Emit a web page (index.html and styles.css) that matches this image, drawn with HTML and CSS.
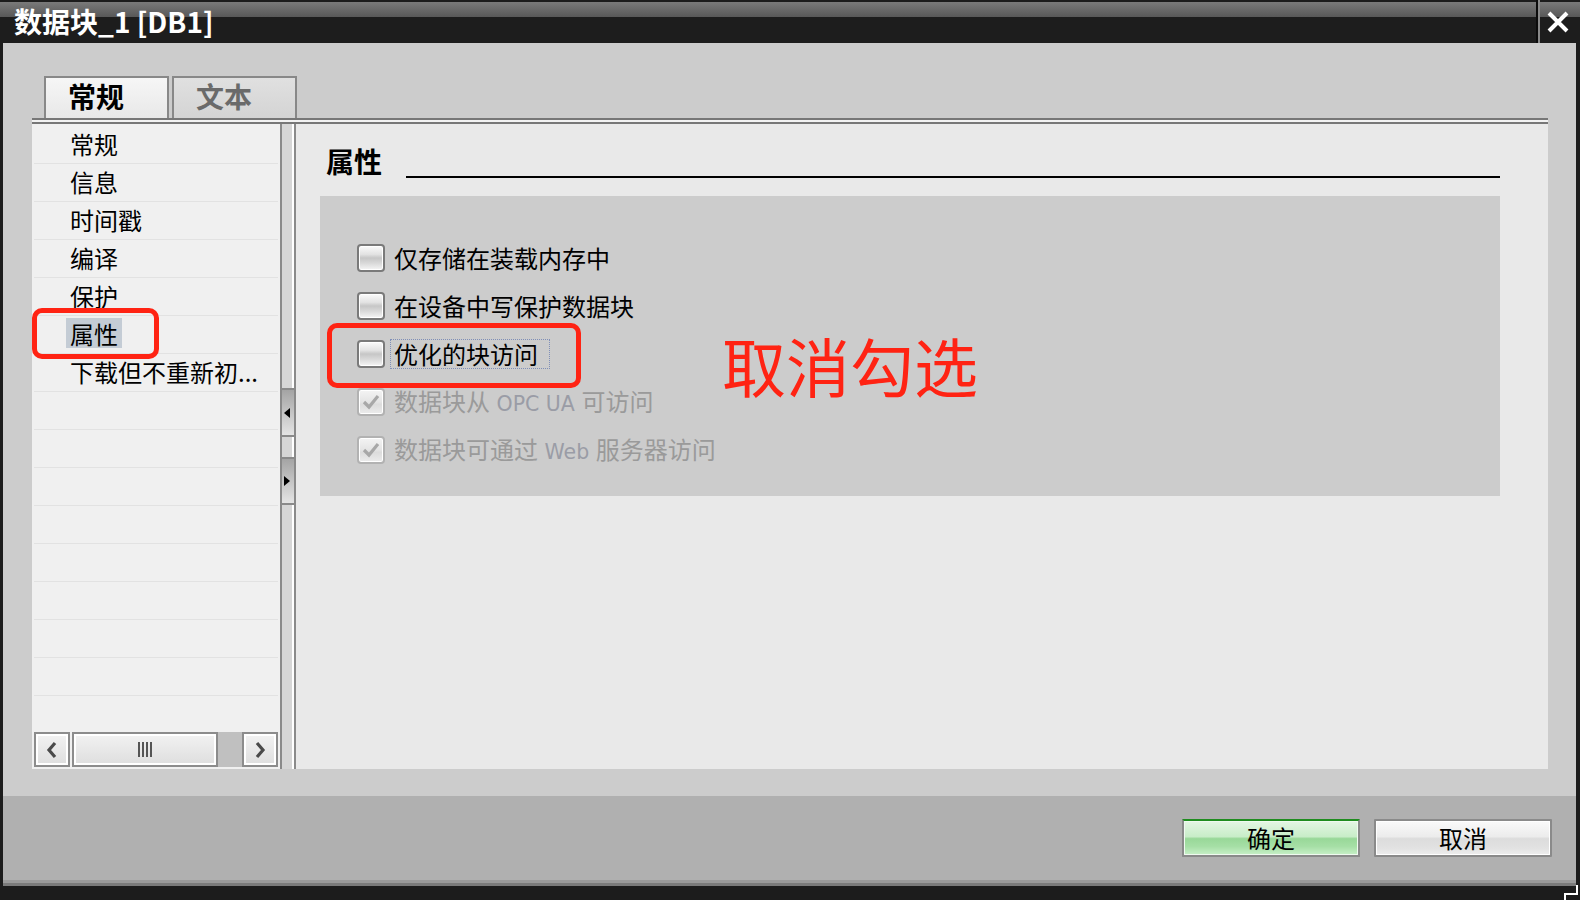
FILE: index.html
```html
<!DOCTYPE html>
<html lang="zh-CN">
<head>
<meta charset="utf-8">
<title>数据块_1 [DB1]</title>
<link rel="stylesheet" href="styles.css">
</head>
<body>
<div class="window">
  <div class="titlebar">
    <div class="title">数据块_1 [DB1]</div>
    <div class="close">
      <svg width="22" height="22" viewBox="0 0 22 22"><path d="M2 2 L20 20 M20 2 L2 20" stroke="#fff" stroke-width="4" fill="none"/></svg>
    </div>
  </div>
  <div class="client">
    <div class="tabs">
      <div class="tab active">常规</div>
      <div class="tab">文本</div>
    </div>
    <div class="frame">
      <div class="frame-line"></div>
      <div class="frame-body">
        <div class="nav">
          <ul class="nav-list">
            <li><span>常规</span></li>
            <li><span>信息</span></li>
            <li><span>时间戳</span></li>
            <li><span>编译</span></li>
            <li><span>保护</span></li>
            <li><span class="sel">属性</span></li>
            <li><span>下载但不重新初...</span></li>
            <li></li><li></li><li></li><li></li><li></li><li></li><li></li><li></li><li></li>
          </ul>
          <div class="hscroll">
            <div class="sb-btn">
              <svg width="14" height="18" viewBox="0 0 14 18"><path d="M10 2 L4 9 L10 16" stroke="#4a4a4a" stroke-width="3.2" fill="none"/></svg>
            </div>
            <div class="sb-thumb"><span class="grip"><i></i><i></i><i></i><i></i></span></div>
            <div class="sb-track"></div>
            <div class="sb-btn">
              <svg width="14" height="18" viewBox="0 0 14 18"><path d="M4 2 L10 9 L4 16" stroke="#4a4a4a" stroke-width="3.2" fill="none"/></svg>
            </div>
          </div>
        </div>
        <div class="splitter">
          <div class="sp-top"></div>
          <div class="sp-btn">
            <svg width="6" height="10" viewBox="0 0 6 10"><path d="M6 0 L0 5 L6 10 Z" fill="#000"/></svg>
          </div>
          <div class="sp-mid"></div>
          <div class="sp-btn sp-btn2">
            <svg width="6" height="10" viewBox="0 0 6 10"><path d="M0 0 L6 5 L0 10 Z" fill="#000"/></svg>
          </div>
          <div class="sp-rest"></div>
        </div>
        <div class="content">
          <div class="section-head">
            <h2>属性</h2>
            <div class="rule"></div>
          </div>
          <div class="options">
            <div class="opt"><span class="cb"></span><span class="lbl">仅存储在装载内存中</span></div>
            <div class="opt"><span class="cb"></span><span class="lbl">在设备中写保护数据块</span></div>
            <div class="opt"><span class="cb"></span><span class="lbl focus">优化的块访问</span></div>
            <div class="opt disabled"><span class="cb"><svg width="24" height="24" viewBox="0 0 24 24"><path d="M5 12 L10 17 L19 6" stroke="#a8a8a8" stroke-width="3.2" fill="none"/></svg></span><span class="lbl">数据块从<span class="lat"> OPC UA </span>可访问</span></div>
            <div class="opt disabled"><span class="cb"><svg width="24" height="24" viewBox="0 0 24 24"><path d="M5 12 L10 17 L19 6" stroke="#a8a8a8" stroke-width="3.2" fill="none"/></svg></span><span class="lbl">数据块可通过<span class="lat"> Web </span>服务器访问</span></div>
          </div>
        </div>
      </div>
    </div>
    <div class="gap"></div>
    <div class="footer">
      <button class="btn ok">确定</button>
      <button class="btn">取消</button>
    </div>
  </div>
  <div class="bottom-edge"></div>

  <div class="mark mark-nav"></div>
  <div class="mark mark-opt"></div>
  <div class="note">取消勾选</div>
  <svg class="grip-corner" width="18" height="15" viewBox="0 0 18 15"><path d="M15 0 V9 H3 V15" stroke="#fff" stroke-width="2" fill="none"/></svg>
</div>
</body>
</html>
```

FILE: styles.css
```css
* { box-sizing: border-box; }
html, body { margin: 0; padding: 0; }
body {
  background: #1c1c1c;
  font-family: "Noto Sans CJK SC", "Noto Sans", sans-serif;
  color: #000;
}
.window {
  position: relative;
  width: 1580px;
  height: 900px;
  overflow: hidden;
  display: flex;
  flex-direction: column;
  background: #1c1c1c;
}

/* title bar */
.titlebar {
  height: 43px;
  flex: none;
  display: flex;
  background: linear-gradient(to bottom, #1c1c1c 0, #1c1c1c 2px, #7a7a7a 2px, #585858 17px, #1d1d1d 17px, #1d1d1d 100%);
  padding-right: 4px;
}
.title {
  flex: 1;
  padding-left: 14px;
  color: #fff;
  font-size: 28px;
  font-weight: 700;
  line-height: 43px;
  white-space: nowrap;
}
.close {
  width: 40px;
  border-left: 2px solid #0c0c0c;
  box-shadow: inset 2px 0 0 #8a8a8a;
  display: flex;
  align-items: center;
  justify-content: center;
  padding-left: 2px;
}

/* client area */
.client {
  flex: none;
  height: 837px;
  margin: 0 4px 0 3px;
  background: #cccccc;
  display: flex;
  flex-direction: column;
}
.tabs {
  display: flex;
  gap: 3px;
  padding: 33px 0 0 41px;
  height: 75px;
}
.tab {
  width: 125px;
  height: 42px;
  border: 2px solid #888;
  border-bottom: none;
  padding-left: 22px;
  font-size: 28px;
  font-weight: 700;
  line-height: 36px;
  color: #6a6a6a;
  background: linear-gradient(to bottom, #e0e0e0, #d4d4d4);
}
.tab.active {
  color: #000;
  background: linear-gradient(to bottom, #f6f6f6, #e8e8e8);
}

.frame {
  margin: 0 28px 0 29px;
  display: flex;
  flex-direction: column;
}
.frame-line {
  height: 6px;
  background: linear-gradient(to bottom, #777 0, #777 2px, #f2f2f2 2px, #f2f2f2 4px, #777 4px, #777 6px);
}
.frame-body {
  height: 645px;
  display: flex;
}

/* navigation list */
.nav {
  width: 248px;
  background: #f0f0f0;
  display: flex;
  flex-direction: column;
}
.nav-list {
  flex: 1;
  list-style: none;
  margin: 0;
  padding: 2px 0 0 0;
  overflow: hidden;
}
.nav-list li {
  height: 38px;
  margin: 0 2px;
  padding-left: 32px;
  border-bottom: 1px solid #e2e2e2;
  font-size: 24px;
  white-space: nowrap;
}
.nav-list li span {
  display: inline-block;
  height: 30px;
  line-height: 32px;
  padding: 0 4px;
}
.nav-list li span.sel { background: #c4ccd5; }

.hscroll {
  height: 35px;
  margin: 0 2px 2px 2px;
  display: flex;
  flex: none;
}
.sb-btn, .sb-thumb {
  border: 2px solid #8c8c8c;
  box-shadow: inset 0 0 0 2px #fff;
  background: linear-gradient(to bottom, #f2f2f2, #dedede);
  display: flex;
  align-items: center;
  justify-content: center;
}
.sb-btn { width: 36px; }
.sb-thumb { width: 146px; margin-left: 2px; }
.sb-track { width: 24px; background: #c0c0c0; }
.grip { display: flex; gap: 2px; }
.grip i { display: block; width: 2px; height: 15px; background: #555; }

/* splitter */
.splitter {
  width: 16px;
  border-left: 2px solid #8a8a8a;
  border-right: 2px solid #8a8a8a;
  background: #d6d6d6;
  box-shadow: inset -2px 0 0 #fff;
  display: flex;
  flex-direction: column;
}
.sp-top { height: 264px; }
.sp-btn {
  height: 47px;
  border-top: 2px solid #8a8a8a;
  background: linear-gradient(to bottom, #a4a4a4, #e4e4e4);
  display: flex;
  align-items: center;
  padding-left: 2px;
}
.sp-mid { height: 22px; border-top: 2px solid #8a8a8a; }
.sp-btn2 { height: 48px; border-bottom: 2px solid #8a8a8a; }
.sp-rest { flex: 1; }

/* content */
.content {
  flex: 1;
  background: #e9e9e9;
}
.section-head {
  height: 54px;
  margin: 0 48px 0 30px;
  display: flex;
  align-items: flex-end;
}
.section-head h2 {
  margin: 0 0 2px 0;
  font-size: 28px;
  font-weight: 700;
  line-height: 30px;
}
.rule {
  flex: 1;
  height: 2px;
  background: #000;
  margin-left: 24px;
}
.options {
  margin: 18px 48px 0 24px;
  height: 300px;
  background: #cccccc;
  padding: 38px 0 0 37px;
}
.opt {
  height: 48px;
  display: flex;
  align-items: center;
}
.cb {
  width: 28px;
  height: 28px;
  border: 2px solid #7a7a7a;
  border-radius: 4px;
  background: linear-gradient(to bottom, #fbfbfb 0%, #e2e2e2 35%, #c6c6c6 50%, #d9d9d9 72%, #f6f6f6 100%);
  box-shadow: inset 0 0 0 1px #fff;
  display: flex;
  align-items: center;
  justify-content: center;
}
.lbl {
  margin-left: 5px;
  border: 1px dotted transparent;
  padding: 0 11px 0 3px;
  font-size: 24px;
  line-height: 28px;
  white-space: nowrap;
}
.lbl.focus { border-color: #7f8fb8; }
.opt.disabled .lbl { color: #9a9a9a; }
.opt.disabled .cb {
  border-color: #b2b2b2;
  background: linear-gradient(to bottom, #f4f4f4 0%, #e4e4e4 50%, #dcdcdc 60%, #ececec 100%);
}
.lat {
  font-family: "DejaVu Sans", sans-serif;
  font-size: 20.5px;
  color: #9a9ca6;
}

.gap { height: 27px; flex: none; }

/* footer */
.footer {
  flex: 1;
  background: #b0b0b0;
  display: flex;
  justify-content: flex-end;
  align-items: flex-start;
  gap: 14px;
  padding: 23px 24px 0 0;
}
.btn {
  width: 178px;
  height: 38px;
  border: 2px solid #8a8a8a;
  border-radius: 1px;
  font-family: "Noto Sans CJK SC", sans-serif;
  font-size: 24px;
  line-height: 30px;
  color: #000;
  padding: 0;
  background: linear-gradient(to bottom, #fafafa 0%, #ececec 46%, #dcdcdc 52%, #e2e2e2 80%, #eeeeee 100%);
  box-shadow: inset 0 0 0 1px #fff;
}
.btn.ok {
  border-top-color: #1e8c1e;
  background: linear-gradient(to bottom, #e4f6e4 0%, #c8edc8 46%, #98d898 52%, #a6dfa6 75%, #c8f0c8 100%);
  box-shadow: inset 0 0 0 1px #effaef;
}

.bottom-edge {
  flex: 1;
  margin: 0 4px 0 3px;
  background: linear-gradient(to bottom, #9a9a9a 0, #9a9a9a 3px, #7a7a7a 3px, #7a7a7a 6px, #1c1c1c 6px);
}

/* annotations */
.mark {
  position: absolute;
  border: 5px solid #ff2313;
  border-radius: 10px;
}
.mark-nav { left: 32px; top: 308px; width: 127px; height: 51px; }
.mark-opt { left: 327px; top: 323px; width: 254px; height: 65px; }
.note {
  position: absolute;
  left: 722px;
  top: 332px;
  font-size: 64px;
  line-height: 64px;
  color: #ff2313;
  white-space: nowrap;
}
.grip-corner {
  position: absolute;
  right: 0;
  bottom: 0;
}
```
